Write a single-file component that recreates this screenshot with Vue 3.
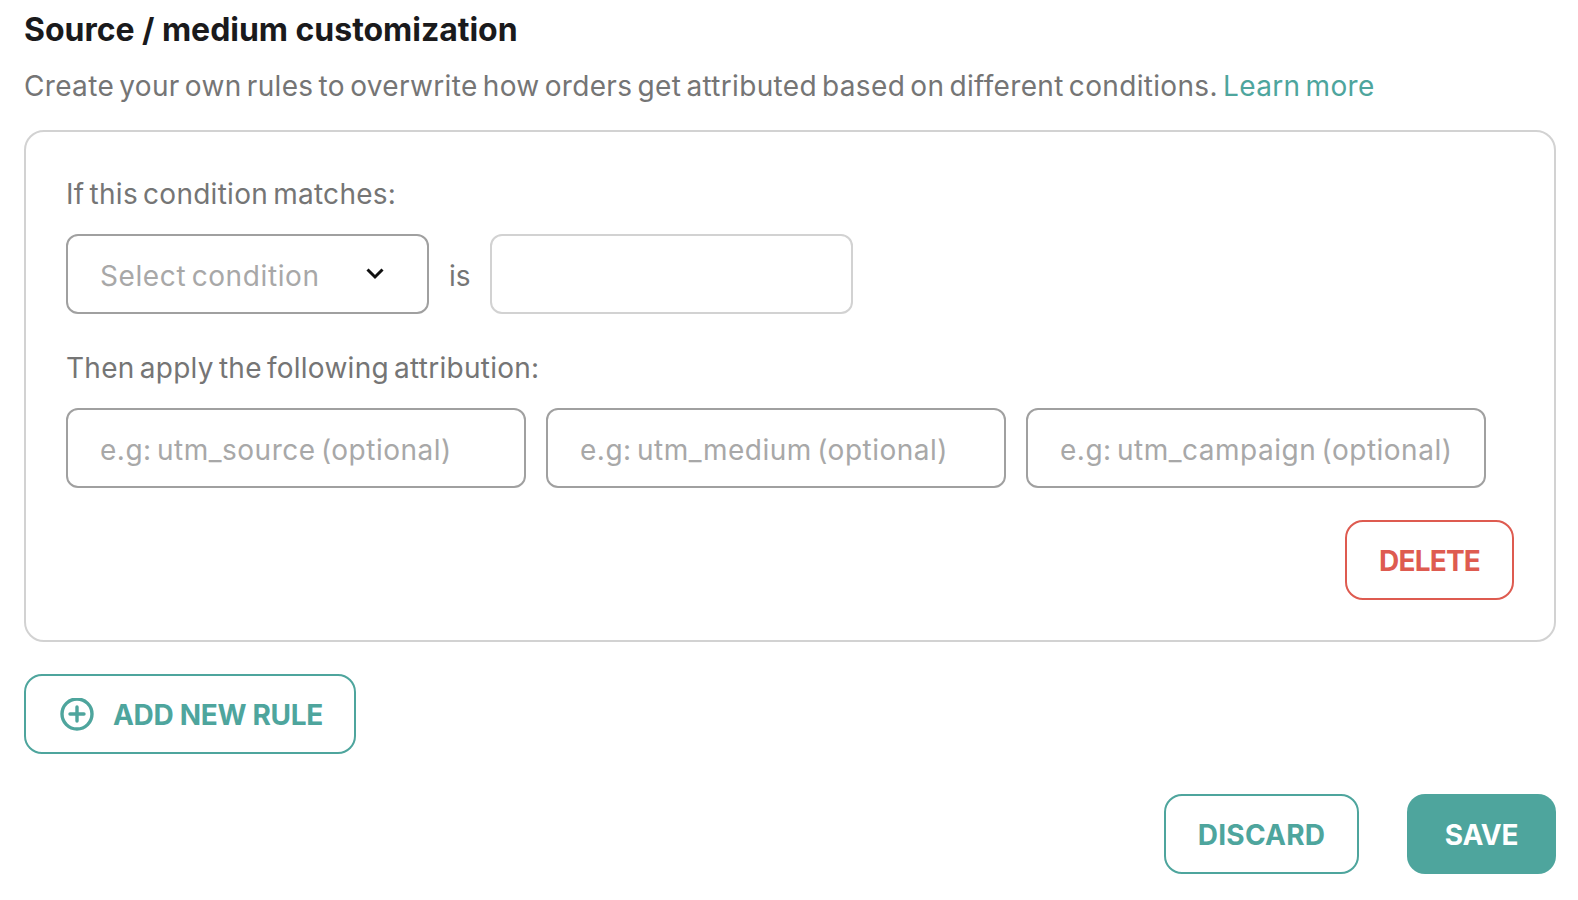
<template>
  <div class="page">
    <h1 class="title">Source / medium customization</h1>
    <p class="desc">Create your own rules to overwrite how orders get attributed based on different conditions. <a class="learn">Learn more</a></p>

    <div class="ruleCard">
      <div class="label">If this condition matches:</div>
      <div class="conditionRow">
        <div class="select">
          <span>Select condition</span>
          <svg width="20" height="14" viewBox="0 0 20 14" fill="none">
            <path d="M2.5 3.5L10 11L17.5 3.5" stroke="#111" stroke-width="3" />
          </svg>
        </div>
        <span class="isText">is</span>
        <input class="field lightField" type="text">
      </div>

      <div class="label thenLabel">Then apply the following attribution:</div>
      <div class="attrRow">
        <input v-for="name in utmFields" :key="name" class="field" type="text" :placeholder="'e.g: ' + name + ' (optional)'">
      </div>

      <div class="deleteRow">
        <button class="btn deleteBtn">DELETE</button>
      </div>
    </div>

    <button class="btn addBtn">
      <svg width="34" height="34" viewBox="0 0 34 34" fill="none">
        <circle cx="17" cy="16" r="15" stroke="#4ea59d" stroke-width="3.4" />
        <path d="M17 9V23M10 16H24" stroke="#4ea59d" stroke-width="3.4" stroke-linecap="round" />
      </svg>
      ADD NEW RULE
    </button>

    <div class="footer">
      <button class="btn discardBtn">DISCARD</button>
      <button class="btn saveBtn">SAVE</button>
    </div>
  </div>
</template>

<script setup>
const utmFields = ['utm_source', 'utm_medium', 'utm_campaign'];
</script>

<style>
body {
  background: #fff;
}
</style>

<style scoped>
.page {
  box-sizing: border-box;
  width: 1578px;
  height: 900px;
  padding: 10px 22px 0 24px;
  font-family: "Inter", "Liberation Sans", sans-serif;
  overflow: hidden;
}
.title {
  margin: 0;
  font-size: 32px;
  line-height: 40px;
  font-weight: 700;
  letter-spacing: -0.03px;
  color: #1a1a1c;
}
.desc {
  margin: 16px 0 0;
  font-size: 28px;
  line-height: 40px;
  letter-spacing: 0.33px;
  word-spacing: -3px;
  color: #757575;
  white-space: nowrap;
}
.learn {
  color: #4ea59d;
}
.ruleCard {
  box-sizing: border-box;
  height: 512px;
  margin-top: 24px;
  padding: 44px 40px 0;
  border: 2px solid #d2d2d2;
  border-radius: 20px;
}
.label {
  font-size: 28px;
  line-height: 36px;
  letter-spacing: 0.27px;
  word-spacing: -3px;
  color: #757575;
}
.conditionRow {
  display: flex;
  align-items: center;
  margin-top: 22px;
}
.select {
  box-sizing: border-box;
  width: 363px;
  height: 80px;
  padding: 3px 42px 0 32px;
  display: flex;
  align-items: center;
  justify-content: space-between;
  border: 2px solid #a0a0a0;
  border-radius: 12px;
  font-size: 28px;
  letter-spacing: 0.6px;
  word-spacing: -3px;
  color: #a8a8a8;
}
.select svg {
  margin-top: -6px;
}
.isText {
  width: 61px;
  padding: 3px 0 0 20px;
  box-sizing: border-box;
  font-size: 28px;
  color: #757575;
}
.field {
  box-sizing: border-box;
  width: 460px;
  height: 80px;
  padding: 4px 32px 0;
  border: 2px solid #a0a0a0;
  border-radius: 12px;
  outline: none;
  background: #fff;
  font-family: inherit;
  font-size: 28px;
  letter-spacing: 0.5px;
  word-spacing: -3px;
  color: #333;
}
.field::placeholder {
  color: #a8a8a8;
  opacity: 1;
}
.lightField {
  width: 363px;
  border-color: #d2d2d2;
}
.thenLabel {
  margin-top: 36px;
}
.attrRow {
  display: flex;
  gap: 20px;
  margin-top: 22px;
}
.deleteRow {
  display: flex;
  justify-content: flex-end;
  margin-top: 32px;
}
.btn {
  box-sizing: border-box;
  height: 80px;
  display: flex;
  align-items: center;
  justify-content: center;
  background: #fff;
  border-radius: 18px;
  font-family: inherit;
  font-size: 28px;
  font-weight: 650;
  letter-spacing: -0.3px;
  padding: 2px 0 0;
}
.deleteBtn {
  width: 169px;
  border: 2px solid #de5b50;
  color: #de5b50;
  letter-spacing: -0.8px;
}
.addBtn {
  width: 332px;
  margin-top: 32px;
  padding-left: 3px;
  gap: 19px;
  border: 2px solid #4ea59d;
  color: #4ea59d;
}
.footer {
  display: flex;
  justify-content: flex-end;
  gap: 48px;
  margin-top: 40px;
}
.discardBtn {
  width: 195px;
  border: 2px solid #4ea59d;
  color: #4ea59d;
  letter-spacing: 0.2px;
}
.saveBtn {
  width: 149px;
  border: none;
  background: #4ea59d;
  color: #fff;
}
</style>
